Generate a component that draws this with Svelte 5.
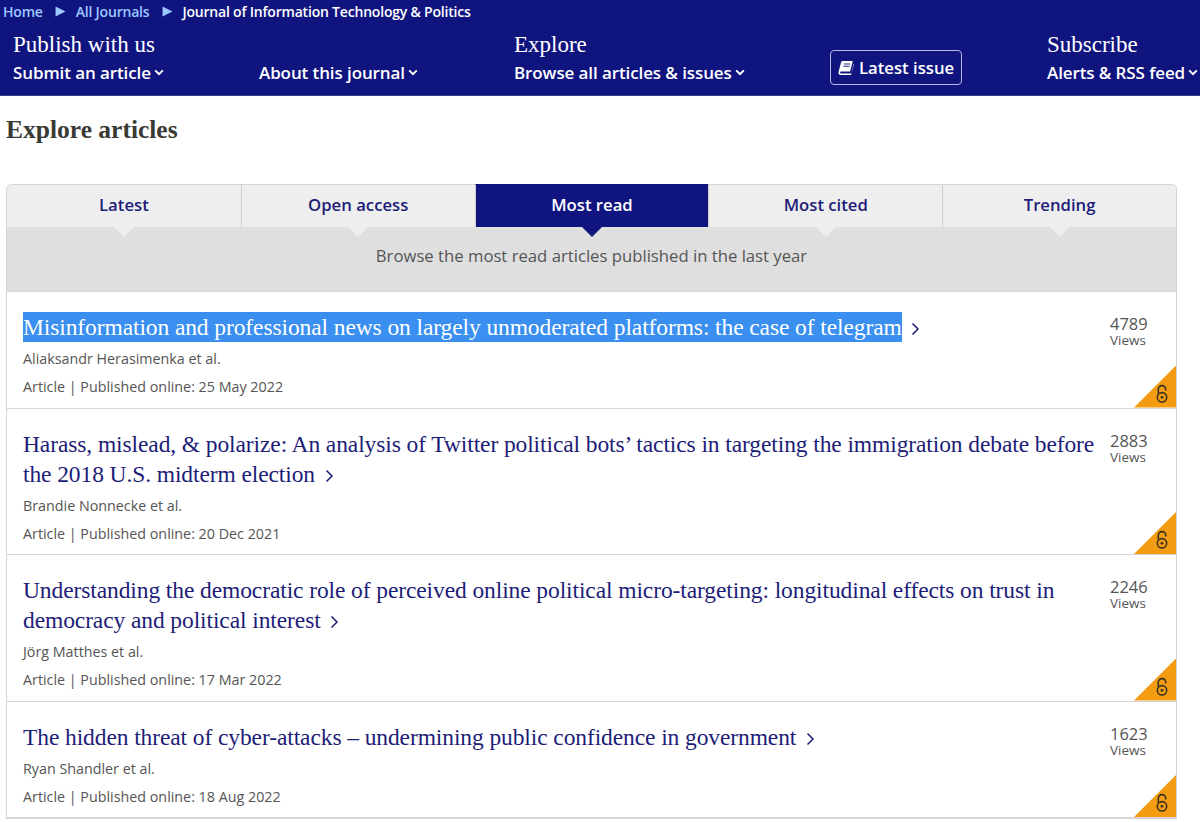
<script>
  const navCols = [
    { title: 'Publish with us', label: 'Submit an article', cls: 'w-publish' },
    { title: '', label: 'About this journal', cls: 'w-about' },
    { title: 'Explore', label: 'Browse all articles & issues', cls: 'w-explore' }
  ];

  const tabs = ['Latest', 'Open access', 'Most read', 'Most cited', 'Trending'];
  const activeTab = 'Most read';

  const articles = [
    {
      title: 'Misinformation and professional news on largely unmoderated platforms: the case of telegram',
      authors: 'Aliaksandr Herasimenka et al.',
      date: '25 May 2022',
      views: 4789,
      selected: true
    },
    {
      title: 'Harass, mislead, & polarize: An analysis of Twitter political bots’ tactics in targeting the immigration debate before the 2018 U.S. midterm election',
      authors: 'Brandie Nonnecke et al.',
      date: '20 Dec 2021',
      views: 2883
    },
    {
      title: 'Understanding the democratic role of perceived online political micro-targeting: longitudinal effects on trust in democracy and political interest',
      authors: 'Jörg Matthes et al.',
      date: '17 Mar 2022',
      views: 2246
    },
    {
      title: 'The hidden threat of cyber-attacks – undermining public confidence in government',
      authors: 'Ryan Shandler et al.',
      date: '18 Aug 2022',
      views: 1623
    }
  ];
</script>

{#snippet caret()}
  <svg class="caret" viewBox="0 0 10 7" aria-hidden="true">
    <path d="M1.2 1.4 5 5.2l3.8-3.8" fill="none" stroke="currentColor" stroke-width="2" />
  </svg>
{/snippet}

{#snippet crumbArrow()}
  <svg class="crumb-arrow" viewBox="0 0 10 10" aria-hidden="true">
    <path d="M0.5 0.5 9.5 5 0.5 9.5z" fill="currentColor" />
  </svg>
{/snippet}

<header class="top">
  <nav class="crumbs">
    <a href="#home">Home</a>
    {@render crumbArrow()}
    <a href="#journals">All Journals</a>
    {@render crumbArrow()}
    <span class="current">Journal of Information Technology &amp; Politics</span>
  </nav>

  <div class="nav">
    {#each navCols as col}
      <div class="nav-col {col.cls}">
        <div class="nav-title">{col.title}</div>
        <a class="nav-link" href="#menu">{col.label}{@render caret()}</a>
      </div>
    {/each}
    <div class="nav-col w-latest">
      <a class="latest" href="#latest">
        <svg class="book" viewBox="0 0 16 16" aria-hidden="true">
          <path d="M4.6 1h10.2l-2.7 10.6H3.4c-.8 0-1.2.4-1.3.9-.1.6.4 1 1.1 1h9.6c.4 0 .6-.2.8-.6L15.6 3.6l.4.4-2.6 10.3c-.2.5-.6.7-1.1.7H2.9C1.3 15 .3 13.9.5 12.4.6 11.9 2.7 3.7 3 2.6 3.2 1.7 3.8 1 4.6 1z" fill="#fff" />
          <path d="M6 4h6.2M5.4 6.3h6.2" stroke="#10147f" stroke-width=".9" />
        </svg>
        Latest issue
      </a>
    </div>
    <div class="nav-col">
      <div class="nav-title">Subscribe</div>
      <a class="nav-link" href="#alerts">Alerts &amp; RSS feed{@render caret()}</a>
    </div>
  </div>
</header>

<main class="page">
  <h2 class="heading">Explore articles</h2>

  <section class="card">
    <div class="tabs">
      {#each tabs as tab}
        <button class="tab" class:active={tab === activeTab}>{tab}</button>
      {/each}
    </div>
    <p class="intro">Browse the most read articles published in the last year</p>

    {#each articles as a}
      <article class="row">
        <div class="body">
          <h3 class="title">
            <a href="#article"><span class:selected={a.selected}>{a.title}</span></a>
            <svg class="chev" viewBox="0 0 8 14" aria-hidden="true">
              <path d="M1 1.5 6.5 7 1 12.5" fill="none" stroke="currentColor" stroke-width="1.5" />
            </svg>
          </h3>
          <div class="authors">{a.authors}</div>
          <div class="meta">Article | Published online: {a.date}</div>
        </div>
        <div class="views">
          <span class="count">{a.views}</span>
          <span class="views-label">Views</span>
        </div>
        <div class="oa">
          <svg viewBox="0 0 14 20" aria-hidden="true">
            <circle cx="7" cy="13.3" r="4.7" fill="none" stroke="#3a3320" stroke-width="1.6" />
            <circle cx="7" cy="13.3" r="1.4" fill="#3a3320" />
            <path d="M3.3 9.8V5.3a3.7 3.7 0 0 1 7.4 0V6.5" fill="none" stroke="#3a3320" stroke-width="1.6" />
          </svg>
        </div>
      </article>
    {/each}
  </section>
</main>

<style>
  :global(body) {
    margin: 0;
    background: #fff;
    font-family: "Open Sans", "Liberation Sans", sans-serif;
  }

  a {
    color: inherit;
    text-decoration: none;
  }

  .top {
    height: 95px;
    background: #10147f;
    border-bottom: 1px solid #3d4196;
    color: #fff;
    overflow: hidden;
  }

  .crumbs {
    display: flex;
    align-items: center;
    height: 23px;
    padding-left: 3px;
    font-size: 14px;
    font-weight: 600;
    letter-spacing: -0.2px;
    color: #9cc8ff;
  }

  .crumb-arrow {
    width: 11px;
    height: 11px;
    margin: 0 9.5px 0 12.5px;
  }

  .current {
    color: #fff;
  }

  .nav {
    display: flex;
    padding-left: 13px;
  }

  .nav-col {
    display: flex;
    flex-direction: column;
  }

  .w-publish { width: 246px; }
  .w-about { width: 255px; }
  .w-explore { width: 316px; }
  .w-latest { width: 217px; }

  .nav-title {
    height: 30px;
    margin-top: 7px;
    font-family: "Liberation Serif", serif;
    font-size: 23px;
    line-height: 30px;
  }

  .nav-link {
    display: flex;
    align-items: center;
    font-size: 17px;
    font-weight: 600;
    line-height: 25px;
    letter-spacing: -0.1px;
    white-space: nowrap;
  }

  .caret {
    width: 10px;
    height: 7px;
    margin-left: 3px;
  }

  .latest {
    display: flex;
    align-items: center;
    gap: 5px;
    box-sizing: border-box;
    width: 132px;
    height: 35px;
    margin-top: 27px;
    padding-left: 7px;
    border: 1px solid #b4b7ea;
    border-radius: 4px;
    font-size: 16.7px;
    font-weight: 600;
  }

  .book {
    width: 16px;
    height: 16px;
  }

  .page {
    padding: 0 23px 0 6px;
  }

  .heading {
    margin: 0;
    padding: 19px 0 39px;
    font-family: "Liberation Serif", serif;
    font-size: 25.5px;
    line-height: 30px;
    font-weight: 700;
    color: #3a3a34;
  }

  .card {
    position: relative;
    border: 1px solid #d6d6d6;
    border-top: 0;
    border-radius: 5px 5px 0 0;
  }

  .tabs {
    display: grid;
    grid-template-columns: repeat(5, 1fr);
    height: 43px;
  }

  .tab {
    position: relative;
    padding: 0 0 3px;
    border: 0;
    border-top: 1px solid #d6d6d6;
    border-left: 1px solid #cfcfcf;
    background: #eeeeee;
    font: 600 16.7px "Open Sans", sans-serif;
    color: #1d1d78;
  }

  .tab:first-child {
    border-left: 0;
    border-top-left-radius: 5px;
  }

  .tab:last-child {
    border-top-right-radius: 5px;
  }

  .tab::after {
    content: "";
    position: absolute;
    left: 50%;
    bottom: -10px;
    width: 20px;
    height: 10px;
    margin-left: -10px;
    clip-path: polygon(0 0, 100% 0, 50% 100%);
    background: #eeeeee;
    z-index: 1;
  }

  .tab.active {
    background: #10147f;
    border-top-color: #10147f;
    color: #fff;
  }

  .tab.active::after {
    background: #10147f;
  }

  .intro {
    margin: 0;
    height: 65px;
    background: #dfdfdf;
    border-bottom: 1px solid #d6d6d6;
    box-sizing: border-box;
    padding-top: 17px;
    text-align: center;
    font-size: 16.7px;
    line-height: 24px;
    color: #555;
  }

  .row {
    position: relative;
    display: flex;
    padding: 20px 0 10.5px 16px;
    border-bottom: 1px solid #d6d6d6;
  }

  .body {
    flex: 1;
    min-width: 0;
  }

  .title {
    margin: 0;
    font-family: "Liberation Serif", serif;
    font-size: 23.5px;
    line-height: 30px;
    font-weight: 400;
    letter-spacing: -0.1px;
    color: #1d1d78;
  }

  .selected {
    display: inline-block;
    background: #3a8ff0;
    color: #fff;
  }

  .chev {
    width: 9px;
    height: 14px;
    margin-left: 4px;
    vertical-align: -1px;
  }

  .authors,
  .meta {
    font-size: 14.3px;
    line-height: 20px;
    color: #555;
  }

  .authors {
    margin-top: 7px;
  }

  .meta {
    margin-top: 8px;
  }

  .views {
    display: flex;
    flex-direction: column;
    width: 67px;
    padding-left: 1px;
    box-sizing: border-box;
    color: #555;
  }

  .count {
    font-size: 16.5px;
    line-height: 18px;
    margin-top: 3px;
  }

  .views-label {
    font-size: 13.5px;
    line-height: 14px;
  }

  .oa {
    position: absolute;
    right: 0;
    bottom: 0;
    width: 42px;
    height: 42px;
    background: #f39c12;
    clip-path: polygon(100% 0, 100% 100%, 0 100%);
  }

  .oa svg {
    position: absolute;
    right: 7px;
    bottom: 4px;
    width: 14px;
    height: 20px;
  }
</style>
